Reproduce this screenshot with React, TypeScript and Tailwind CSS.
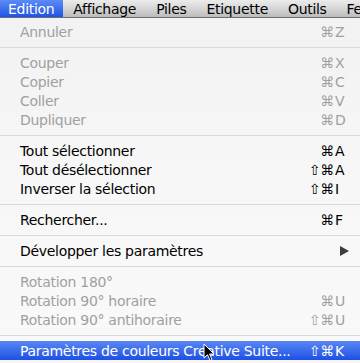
type Item =
  | { kind: "sep" }
  | {
      kind: "item";
      label: string;
      mod?: string;
      key?: string;
      disabled?: boolean;
      submenu?: boolean;
      active?: boolean;
    };

const MENUBAR = ["Affichage", "Piles", "Etiquette", "Outils", "Fenêtre"];

const ITEMS: Item[] = [
  { kind: "item", label: "Annuler", mod: "⌘", key: "Z", disabled: true },
  { kind: "sep" },
  { kind: "item", label: "Couper", mod: "⌘", key: "X", disabled: true },
  { kind: "item", label: "Copier", mod: "⌘", key: "C", disabled: true },
  { kind: "item", label: "Coller", mod: "⌘", key: "V", disabled: true },
  { kind: "item", label: "Dupliquer", mod: "⌘", key: "D", disabled: true },
  { kind: "sep" },
  { kind: "item", label: "Tout sélectionner", mod: "⌘", key: "A" },
  { kind: "item", label: "Tout désélectionner", mod: "⇧⌘", key: "A" },
  { kind: "item", label: "Inverser la sélection", mod: "⇧⌘", key: "I" },
  { kind: "sep" },
  { kind: "item", label: "Rechercher...", mod: "⌘", key: "F" },
  { kind: "sep" },
  { kind: "item", label: "Développer les paramètres", submenu: true },
  { kind: "sep" },
  { kind: "item", label: "Rotation 180°", disabled: true },
  { kind: "item", label: "Rotation 90° horaire", mod: "⌘", key: "U", disabled: true },
  { kind: "item", label: "Rotation 90° antihoraire", mod: "⇧⌘", key: "U", disabled: true },
  { kind: "sep" },
  {
    kind: "item",
    label: "Paramètres de couleurs Creative Suite...",
    mod: "⇧⌘",
    key: "K",
    active: true,
  },
];

export default function App() {
  return (
    <div
      className="relative h-[363px] w-[360px] overflow-hidden bg-[#f5f5f5] text-[14px] leading-none tracking-[-0.3px]"
      style={{ fontFamily: '"DejaVu Sans", "Noto Sans", sans-serif' }}
    >
      {/* menu bar */}
      <div className="flex h-[18px] items-stretch whitespace-nowrap border-b border-[#6e6e6e] bg-gradient-to-b from-[#ececec] via-[#d6d6d6] to-[#bcbcbc]">
        <div className="flex items-center bg-gradient-to-b from-[#5d8bf5] to-[#1f52e6] pl-[8px] pr-[9px] text-white">
          Edition
        </div>
        {MENUBAR.map((name) => (
          <div key={name} className="flex items-center px-[10px] text-black">
            {name}
          </div>
        ))}
      </div>

      {/* menu */}
      <div className="bg-gradient-to-b from-[#f2f2f2] via-[#f7f7f7] to-[#f9f9f9] pt-[4px]">
        {ITEMS.map((item, i) =>
          item.kind === "sep" ? (
            <div key={i} className="flex h-[12px] items-center">
              <div className="h-px w-full bg-[#d9d9d9]" />
            </div>
          ) : (
            <MenuRow key={i} item={item} />
          ),
        )}
      </div>

      {/* mouse pointer */}
      <svg
        className="absolute left-[203px] top-[343px]"
        width="12"
        height="19"
        viewBox="0 0 12 19"
      >
        <path
          d="M1 1 L1 15 L4.5 11.8 L7 17.5 L9 16.6 L6.6 11 L11 11 Z"
          fill="#000"
          stroke="#fff"
          strokeWidth="1"
          strokeLinejoin="round"
        />
      </svg>
    </div>
  );
}

function MenuRow({ item }: { item: Extract<Item, { kind: "item" }> }) {
  const color = item.active
    ? "text-white"
    : item.disabled
      ? "text-[#a0a0a0]"
      : "text-black";

  return (
    <div
      className={`flex h-[19px] items-center whitespace-nowrap pl-[20px] pr-[14px] ${color} ${
        item.active ? "bg-gradient-to-b from-[#5a86f3] to-[#1d4fe4]" : ""
      }`}
    >
      <span className="flex-1">{item.label}</span>
      {item.submenu ? (
        <svg width="9" height="10" viewBox="0 0 9 10" className="mr-[-3px]">
          <path d="M0 0 L9 5 L0 10 Z" fill="#3c3c3c" />
        </svg>
      ) : (
        <>
          <span className="text-right">{item.mod}</span>
          <span className="w-[12px] pl-[1px]">{item.key}</span>
        </>
      )}
    </div>
  );
}
